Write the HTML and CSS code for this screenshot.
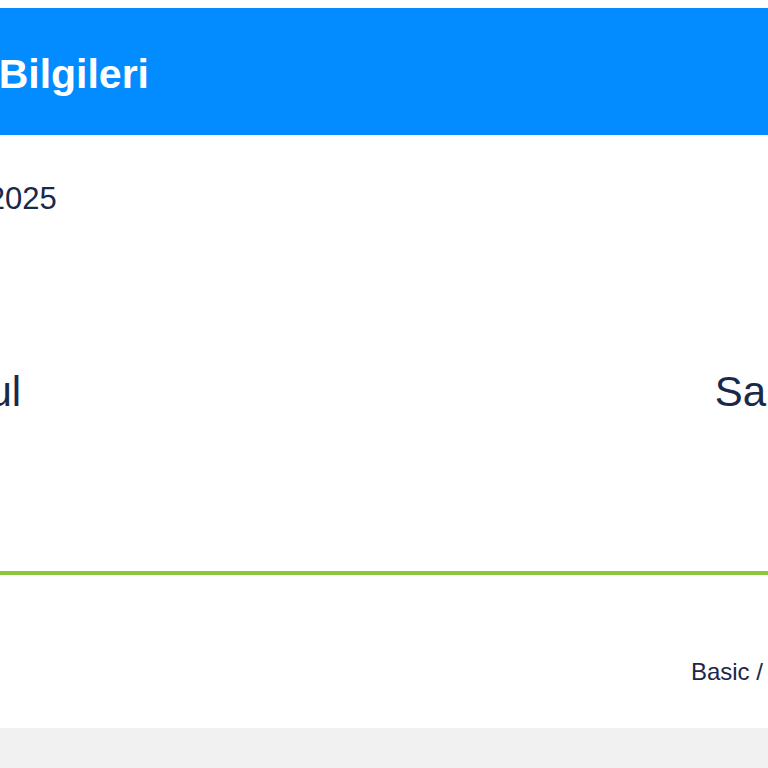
FILE: index.html
```html
<!DOCTYPE html>
<html lang="tr">
<head>
  <meta charset="UTF-8">
  <meta name="viewport" content="width=device-width, initial-scale=1.0">
  <title>Uçuş Bilgileri</title>
  <link rel="stylesheet" href="styles.css">
</head>
<body>

  <div class="page">
    <div class="ticket">
      <div class="ticket-head">
        <h1>Uçuş Bilgileri</h1>
      </div>

      <div class="ticket-body">
        <p class="date">12 Mart 2025</p>
        <div class="route">
          <span class="city">İstanbul</span>
          <span class="city">Sabiha Gökçen</span>
        </div>
      </div>

      <div class="ticket-foot">
        <span class="fare">Basic / Ekonomi</span>
        <span class="price">2.450 TL</span>
      </div>
    </div>
  </div>

  <div class="page-bottom"></div>

</body>
</html>
```

FILE: styles.css
```css
body {
  font-family: "Liberation Sans", Arial, sans-serif;
  margin: 0;
  padding: 0;
  background-color: #fff;
  color: #1a2849;
  overflow: hidden;
}

.page {
  padding-top: 8px;
}

.ticket {
  width: 1176px;
  margin-left: -150px;
  background-color: #fff;
}

.ticket-head {
  background-color: #038cff;
  padding: 42px 24px 37px 37px;
}

.ticket-head h1 {
  margin: 0;
  font-size: 41px;
  line-height: 48px;
  font-weight: bold;
  color: #fff;
}

.ticket-body {
  padding: 45px 24px 154px 24px;
}

.date {
  margin: 0;
  font-size: 31px;
  line-height: 37px;
}

.route {
  display: flex;
  justify-content: space-between;
  margin-top: 150px;
}

.city {
  font-size: 42px;
  line-height: 50px;
}

.ticket-foot {
  border-top: 4px solid #8cc63f;
  display: flex;
  justify-content: flex-end;
  gap: 43px;
  padding: 83px 24px 42px 24px;
  font-size: 24px;
  line-height: 28px;
}

.price {
  font-weight: bold;
}

.page-bottom {
  height: 60px;
  background-color: #f1f1f1;
}
```
